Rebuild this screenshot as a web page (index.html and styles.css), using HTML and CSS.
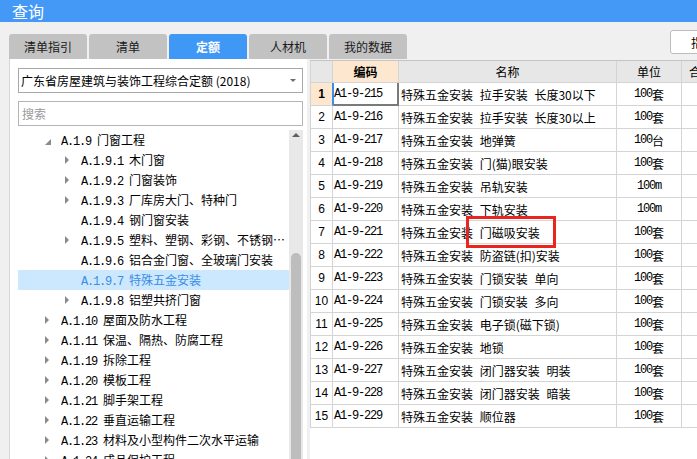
FILE: index.html
```html
<!DOCTYPE html>
<html lang="zh-CN">
<head>
<meta charset="utf-8">
<title>查询</title>
<link rel="stylesheet" href="styles.css">
</head>
<body>
<div class="window">
  <header class="titlebar">查询</header>
  <div class="tabbar">
    <div class="tabs">
      <div class="tab">清单指引</div>
      <div class="tab">清单</div>
      <div class="tab active">定额</div>
      <div class="tab">人材机</div>
      <div class="tab">我的数据</div>
    </div>
    <button class="tool-btn">指引</button>
  </div>
  <div class="main">
    <aside class="left">
      <div class="select"><span>广东省房屋建筑与装饰工程综合定额 (2018)</span><i class="caret"></i></div>
      <div class="search">搜索</div>
      <div class="tree">
        <ul class="tree-list">
          <li class="node l1 open"><i class="tw"></i><span class="lbl"><span class="c">A.1.9 </span>门窗工程</span></li>
          <li class="node l2 closed"><i class="tw"></i><span class="lbl"><span class="c">A.1.9.1 </span>木门窗</span></li>
          <li class="node l2 closed"><i class="tw"></i><span class="lbl"><span class="c">A.1.9.2 </span>门窗装饰</span></li>
          <li class="node l2 closed"><i class="tw"></i><span class="lbl"><span class="c">A.1.9.3 </span>厂库房大门、特种门</span></li>
          <li class="node l2"><i class="tw"></i><span class="lbl"><span class="c">A.1.9.4 </span>钢门窗安装</span></li>
          <li class="node l2 closed"><i class="tw"></i><span class="lbl"><span class="c">A.1.9.5 </span>塑料、塑钢、彩钢、不锈钢门窗</span></li>
          <li class="node l2"><i class="tw"></i><span class="lbl"><span class="c">A.1.9.6 </span>铝合金门窗、全玻璃门安装</span></li>
          <li class="node l2 sel"><i class="tw"></i><span class="lbl"><span class="c">A.1.9.7 </span>特殊五金安装</span></li>
          <li class="node l2 closed"><i class="tw"></i><span class="lbl"><span class="c">A.1.9.8 </span>铝塑共挤门窗</span></li>
          <li class="node l1 closed"><i class="tw"></i><span class="lbl"><span class="c">A.1.10 </span>屋面及防水工程</span></li>
          <li class="node l1 closed"><i class="tw"></i><span class="lbl"><span class="c">A.1.11 </span>保温、隔热、防腐工程</span></li>
          <li class="node l1 closed"><i class="tw"></i><span class="lbl"><span class="c">A.1.19 </span>拆除工程</span></li>
          <li class="node l1 closed"><i class="tw"></i><span class="lbl"><span class="c">A.1.20 </span>模板工程</span></li>
          <li class="node l1 closed"><i class="tw"></i><span class="lbl"><span class="c">A.1.21 </span>脚手架工程</span></li>
          <li class="node l1 closed"><i class="tw"></i><span class="lbl"><span class="c">A.1.22 </span>垂直运输工程</span></li>
          <li class="node l1 closed"><i class="tw"></i><span class="lbl"><span class="c">A.1.23 </span>材料及小型构件二次水平运输</span></li>
          <li class="node l1 closed"><i class="tw"></i><span class="lbl"><span class="c">A.1.24 </span>成品保护工程</span></li>
        </ul>
        <div class="vscroll"><i class="up"></i><div class="thumb"></div></div>
      </div>
    </aside>
    <div class="splitter"></div>
    <section class="right">
      <div class="grid">
        <div class="row head">
          <div class="cell num"></div>
          <div class="cell code-h">编码</div>
          <div class="cell ctr">名称</div>
          <div class="cell ctr">单位</div>
          <div class="cell extra">合价</div>
        </div>
        <div class="row first">
          <div class="cell num">1</div>
          <div class="cell code"><span class="c">A1-9-215</span></div>
          <div class="cell name">特殊五金安装 拉手安装 长度30以下</div>
          <div class="cell ctr"><span class="c">100</span>套</div>
          <div class="cell"></div>
        </div>
        <div class="row">
          <div class="cell num">2</div>
          <div class="cell code"><span class="c">A1-9-216</span></div>
          <div class="cell name">特殊五金安装 拉手安装 长度30以上</div>
          <div class="cell ctr"><span class="c">100</span>套</div>
          <div class="cell"></div>
        </div>
        <div class="row">
          <div class="cell num">3</div>
          <div class="cell code"><span class="c">A1-9-217</span></div>
          <div class="cell name">特殊五金安装 地弹簧</div>
          <div class="cell ctr"><span class="c">100</span>台</div>
          <div class="cell"></div>
        </div>
        <div class="row">
          <div class="cell num">4</div>
          <div class="cell code"><span class="c">A1-9-218</span></div>
          <div class="cell name">特殊五金安装 门(猫)眼安装</div>
          <div class="cell ctr"><span class="c">100</span>套</div>
          <div class="cell"></div>
        </div>
        <div class="row">
          <div class="cell num">5</div>
          <div class="cell code"><span class="c">A1-9-219</span></div>
          <div class="cell name">特殊五金安装 吊轨安装</div>
          <div class="cell ctr"><span class="c">100m</span></div>
          <div class="cell"></div>
        </div>
        <div class="row">
          <div class="cell num">6</div>
          <div class="cell code"><span class="c">A1-9-220</span></div>
          <div class="cell name">特殊五金安装 下轨安装</div>
          <div class="cell ctr"><span class="c">100m</span></div>
          <div class="cell"></div>
        </div>
        <div class="row">
          <div class="cell num">7</div>
          <div class="cell code"><span class="c">A1-9-221</span></div>
          <div class="cell name">特殊五金安装 门磁吸安装</div>
          <div class="cell ctr"><span class="c">100</span>套</div>
          <div class="cell"></div>
        </div>
        <div class="row">
          <div class="cell num">8</div>
          <div class="cell code"><span class="c">A1-9-222</span></div>
          <div class="cell name">特殊五金安装 防盗链(扣)安装</div>
          <div class="cell ctr"><span class="c">100</span>套</div>
          <div class="cell"></div>
        </div>
        <div class="row">
          <div class="cell num">9</div>
          <div class="cell code"><span class="c">A1-9-223</span></div>
          <div class="cell name">特殊五金安装 门锁安装 单向</div>
          <div class="cell ctr"><span class="c">100</span>套</div>
          <div class="cell"></div>
        </div>
        <div class="row">
          <div class="cell num">10</div>
          <div class="cell code"><span class="c">A1-9-224</span></div>
          <div class="cell name">特殊五金安装 门锁安装 多向</div>
          <div class="cell ctr"><span class="c">100</span>套</div>
          <div class="cell"></div>
        </div>
        <div class="row">
          <div class="cell num">11</div>
          <div class="cell code"><span class="c">A1-9-225</span></div>
          <div class="cell name">特殊五金安装 电子锁(磁下锁)</div>
          <div class="cell ctr"><span class="c">100</span>套</div>
          <div class="cell"></div>
        </div>
        <div class="row">
          <div class="cell num">12</div>
          <div class="cell code"><span class="c">A1-9-226</span></div>
          <div class="cell name">特殊五金安装 地锁</div>
          <div class="cell ctr"><span class="c">100</span>套</div>
          <div class="cell"></div>
        </div>
        <div class="row">
          <div class="cell num">13</div>
          <div class="cell code"><span class="c">A1-9-227</span></div>
          <div class="cell name">特殊五金安装 闭门器安装 明装</div>
          <div class="cell ctr"><span class="c">100</span>套</div>
          <div class="cell"></div>
        </div>
        <div class="row">
          <div class="cell num">14</div>
          <div class="cell code"><span class="c">A1-9-228</span></div>
          <div class="cell name">特殊五金安装 闭门器安装 暗装</div>
          <div class="cell ctr"><span class="c">100</span>套</div>
          <div class="cell"></div>
        </div>
        <div class="row">
          <div class="cell num">15</div>
          <div class="cell code"><span class="c">A1-9-229</span></div>
          <div class="cell name">特殊五金安装 顺位器</div>
          <div class="cell ctr"><span class="c">100</span>套</div>
          <div class="cell"></div>
        </div>
      </div>
      <div class="mark"></div>
    </section>
  </div>
</div>
</body>
</html>
```

FILE: styles.css
```css
* { box-sizing: border-box; margin: 0; padding: 0; }
html, body { width: 697px; height: 459px; overflow: hidden; }
body {
  background: #f0f0f0;
  font-family: "Noto Sans CJK SC", "Noto Sans", sans-serif;
  font-size: 12px;
  color: #000;
}
.window { display: flex; flex-direction: column; height: 459px; }

.titlebar {
  height: 22px;
  flex: none;
  background: #4499f7;
  color: #fff;
  font-size: 16px;
  line-height: 21px;
  padding: 1px 0 0 12px;
}

.tabbar {
  height: 37px;
  flex: none;
  display: flex;
  align-items: flex-end;
  padding-left: 9px;
  overflow: hidden;
}
.tabs { display: flex; gap: 2px; }
.tab {
  width: 78px;
  height: 25px;
  background: #c2c2c2;
  border-radius: 3px 3px 0 0;
  text-align: center;
  line-height: 25px;
  color: #1a1a1a;
}
.tab.active { background: #3f97f6; color: #fff; font-weight: bold; }
.tool-btn {
  align-self: flex-start;
  margin: 8px -20px 0 auto;
  width: 47px;
  height: 24px;
  flex: none;
  background: #fff;
  border: 1px solid #bdbdbd;
  border-radius: 3px;
  font: inherit;
  text-align: left;
  padding-left: 20px;
  white-space: nowrap;
  overflow: hidden;
  color: #000;
}

.main { flex: 1; display: flex; min-height: 0; }

.left {
  width: 298px;
  flex: none;
  margin-left: 9px;
  background: #fff;
  border-left: 1px solid #d6d6d6;
  padding: 9px 4px 0 8px;
  display: flex;
  flex-direction: column;
  overflow: hidden;
}
.select {
  height: 25px;
  flex: none;
  border: 1px solid #a8a8a8;
  display: flex;
  align-items: center;
  padding-left: 2px;
  white-space: nowrap;
}
.caret {
  margin-left: auto;
  margin-right: 6px;
  width: 0;
  height: 0;
  border-left: 3px solid transparent;
  border-right: 3px solid transparent;
  border-top: 3px solid #6d6d6d;
}
.search {
  margin-top: 8px;
  height: 25px;
  flex: none;
  border: 1px solid #b5b5b5;
  color: #9a9a9a;
  padding-left: 3px;
  line-height: 23px;
}

.tree { margin-top: 4px; flex: 1; min-height: 0; display: flex; overflow: hidden; }
.tree-list { flex: 1; min-width: 0; list-style: none; }
.node { height: 20px; display: flex; align-items: center; white-space: nowrap; }
.l1 { padding-left: 27px; }
.l2 { padding-left: 47px; }
.tw { width: 16px; height: 20px; flex: none; display: flex; align-items: center; }
.closed .tw::before {
  content: "";
  width: 0; height: 0;
  border-left: 4px solid #8a8a8a;
  border-top: 4px solid transparent;
  border-bottom: 4px solid transparent;
}
.open .tw::before {
  content: "";
  width: 0; height: 0;
  margin-top: 3px;
  border-left: 6px solid transparent;
  border-bottom: 6px solid #8a8a8a;
}
.lbl { min-width: 0; overflow: hidden; text-overflow: ellipsis; }
.node.sel { background: #cce8ff; color: #3a8de4; }
.c { font-family: "Liberation Mono", monospace; letter-spacing: -1.2px; }

.vscroll {
  width: 14px;
  flex: none;
  background: #e8e8e8;
  display: flex;
  flex-direction: column;
  align-items: center;
}
.up {
  margin-top: 3px;
  width: 0; height: 0;
  border-left: 4px solid transparent;
  border-right: 4px solid transparent;
  border-bottom: 4px solid #606060;
}
.thumb {
  margin-top: 116px;
  width: 10px;
  flex: 1;
  background: #bdbdbd;
  border-radius: 5px 5px 0 0;
}

.splitter { width: 3px; flex: none; }

.right {
  flex: 1;
  margin-top: 1px;
  background: #fff;
  position: relative;
  overflow: hidden;
}
.grid { width: 412px; }
.row {
  display: grid;
  grid-template-columns: 22px 66px 218px 65px 40px;
  height: 23px;
  border-left: 1px solid #d4d4d4;
}
.row.head { border-top: 1px solid #c4c4c4; }
.cell {
  border-right: 1px solid #d4d4d4;
  border-bottom: 1px solid #d4d4d4;
  display: flex;
  align-items: center;
  white-space: nowrap;
  overflow: hidden;
}
.head .cell { background: #e7e7e7; justify-content: center; }
.head .code-h { background: #fde8cf; font-weight: bold; }
.head .extra { justify-content: flex-start; padding-left: 7px; }
.num { justify-content: center; font-family: "Liberation Sans", sans-serif; font-size: 12px; }
.first .num { background: #fde8cf; font-weight: bold; border-right-color: #3a8ef0; }
.first .code {
  border-right-color: #7a7a7a;
  border-bottom-color: #7a7a7a;
  box-shadow: inset 1px 0 0 #3a8ef0, inset -1px -1px 0 #7a7a7a;
}
.code { padding-left: 1px; }
.name { padding-left: 2px; word-spacing: 4px; }
.ctr { justify-content: center; }

.mark {
  position: absolute;
  left: 156px;
  top: 156px;
  width: 90px;
  height: 32px;
  border: 3px solid #e8251f;
}
```
